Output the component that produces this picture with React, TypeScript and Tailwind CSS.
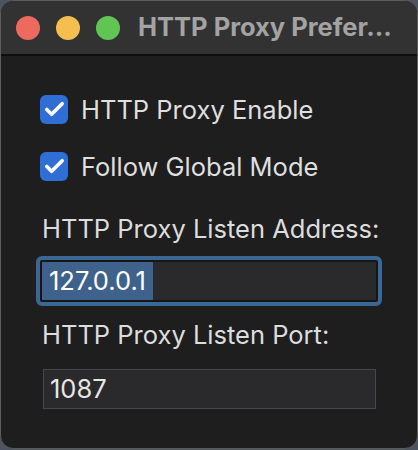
import { Check } from 'lucide-react';

// Checkbox row used for the two toggles
function CheckRow({ label }: { label: string }) {
  return (
    <div className="flex items-center h-[29px]">
      <div className="w-[28px] h-[29px] rounded-[6px] bg-[#2f6ed4] flex items-center justify-center">
        <Check size={23} strokeWidth={3.8} className="text-white" />
      </div>
      <span className="ml-[13px] text-[25.5px] leading-[29px] text-[#dfdfdf]">{label}</span>
    </div>
  );
}

export default function App() {
  return (
    <div
      className="w-[418px] h-[450px] bg-[#4b5460] overflow-hidden"
      style={{ fontFamily: 'Inter, "Liberation Sans", sans-serif' }}
    >
      <div className="h-[449px] rounded-[13px] border border-[#5c5c5c] bg-[#1e1e1f] overflow-hidden flex flex-col">
        {/* Title bar */}
        <div className="h-[55px] shrink-0 bg-[#323233] border-b-2 border-[#0e0e0e] flex items-center pl-[15px]">
          <div className="flex gap-[16px]">
            <span className="w-[24px] h-[24px] rounded-full bg-[#ec6a5e]" />
            <span className="w-[24px] h-[24px] rounded-full bg-[#f4bf4f]" />
            <span className="w-[24px] h-[24px] rounded-full bg-[#61c554]" />
          </div>
          <span className="ml-[18px] text-[25.5px] font-bold text-[#a3a3a3] whitespace-nowrap">HTTP Proxy Prefer...</span>
        </div>

        {/* Body */}
        <div className="flex flex-col pl-[39px] pr-[36px]">
          <div className="mt-[39px]">
            <CheckRow label="HTTP Proxy Enable" />
          </div>
          <div className="mt-[28px]">
            <CheckRow label="Follow Global Mode" />
          </div>

          <div className="mt-[33px] text-[25.5px] leading-[29px] text-[#dcdcdc] pl-[2px]">HTTP Proxy Listen Address:</div>

          <div className="mt-[13px] -ml-[4px] w-[346px] h-[50px] rounded-[6px] border-[4px] border-[#3a6794] bg-[#161617] p-[2px]">
            <div className="h-full bg-[#2a2a2c] flex items-center">
              <span className="h-full flex items-center px-[7px] bg-[#3e628b] text-[25.5px] text-white">127.0.0.1</span>
            </div>
          </div>

          <div className="mt-[14px] text-[25.5px] leading-[29px] text-[#dcdcdc] pl-[2px]">HTTP Proxy Listen Port:</div>

          <div className="mt-[20px] ml-[3px] w-[333px] h-[40px] border border-[#474749] bg-[#2a2a2c] flex items-center pl-[6px]">
            <span className="text-[25.5px] text-[#e6e6e6]">1087</span>
          </div>
        </div>
      </div>
    </div>
  );
}
